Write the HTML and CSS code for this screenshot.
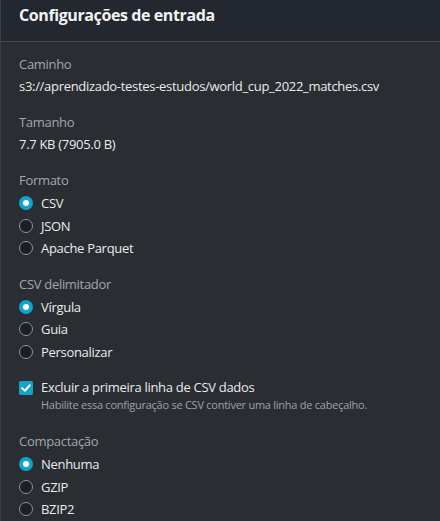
FILE: index.html
```html
<!DOCTYPE html>
<html lang="pt">
<head>
<meta charset="utf-8">
<link rel="stylesheet" href="styles.css">
</head>
<body>
<div class="panel">
  <div class="header"><h2 class="title">Configurações de entrada</h2></div>
  <div class="content">
    <div class="field">
      <div class="label">Caminho</div>
      <div class="value">s3://aprendizado-testes-estudos/world_cup_2022_matches.csv</div>
    </div>
    <div class="field">
      <div class="label">Tamanho</div>
      <div class="value">7.7 KB (7905.0 B)</div>
    </div>
    <div class="field">
      <div class="label">Formato</div>
      <div class="options">
        <div class="opt"><span class="radio on"></span><span>CSV</span></div>
        <div class="opt"><span class="radio"></span><span>JSON</span></div>
        <div class="opt"><span class="radio"></span><span>Apache Parquet</span></div>
      </div>
    </div>
    <div class="field">
      <div class="label">CSV delimitador</div>
      <div class="options">
        <div class="opt"><span class="radio on"></span><span>Vírgula</span></div>
        <div class="opt"><span class="radio"></span><span>Guia</span></div>
        <div class="opt"><span class="radio"></span><span>Personalizar</span></div>
      </div>
    </div>
    <div class="field check-field">
      <div class="check-row">
        <span class="checkbox"><svg viewBox="0 0 14 14" width="14" height="14"><path d="M3.2 7.2 L5.9 9.8 L10.8 4.2" fill="none" stroke="#fff" stroke-width="2" stroke-linecap="round" stroke-linejoin="round"/></svg></span>
        <div class="check-text">
          <div class="check-label">Excluir a primeira linha de CSV dados</div>
          <div class="desc">Habilite essa configuração se CSV contiver uma linha de cabeçalho.</div>
        </div>
      </div>
    </div>
    <div class="field">
      <div class="label">Compactação</div>
      <div class="options">
        <div class="opt"><span class="radio on"></span><span>Nenhuma</span></div>
        <div class="opt"><span class="radio"></span><span>GZIP</span></div>
        <div class="opt"><span class="radio"></span><span>BZIP2</span></div>
      </div>
    </div>
  </div>
</div>
</body>
</html>
```
FILE: styles.css
```css
html, body {
  margin: 0;
  padding: 0;
  background: #2a2e33;
}
body {
  font-family: "Open Sans", "Noto Sans", sans-serif;
  color: #e9ebed;
  font-size: 13px;
  letter-spacing: -0.3px;
  height: 521px;
  overflow: hidden;
}
.panel {
  border-left: 1px solid #3a3e45;
  min-height: 521px;
  background: #2a2e33;
}
.header {
  box-sizing: border-box;
  background: #232730;
  height: 42px;
  border-bottom: 1px solid #474b53;
  padding: 4px 0 0 18px;
}
.title {
  margin: 0;
  font-size: 16px;
  line-height: 22px;
  font-weight: 700;
  color: #f2f3f3;
  letter-spacing: -0.4px;
}
.content {
  padding: 13px 18px 0 18px;
  display: flex;
  flex-direction: column;
  gap: 17px;
}
.field {
  display: flex;
  flex-direction: column;
}
.label {
  color: #a2a7ae;
  font-size: 13px;
  line-height: 19px;
  margin-bottom: 3px;
}
.value {
  font-size: 13px;
  line-height: 19px;
  color: #e9ebed;
}
.options {
  display: flex;
  flex-direction: column;
  margin-top: -1px;
  margin-bottom: -2px;
}
.opt {
  display: flex;
  align-items: center;
  gap: 8px;
  height: 22.5px;
  font-size: 13px;
  color: #e9ebed;
}
.radio {
  box-sizing: border-box;
  width: 14px;
  height: 14px;
  border-radius: 50%;
  border: 1.5px solid #8d939b;
  background: #1b1f27;
  flex: none;
}
.radio.on {
  border: 4.5px solid #10a5cc;
  background: #fff;
}
.check-field {
  margin-bottom: 3px;
}
.check-row {
  display: flex;
  gap: 8px;
  align-items: flex-start;
}
.checkbox {
  width: 14px;
  height: 14px;
  border-radius: 2px;
  background: #10a5cc;
  flex: none;
  margin-top: 2.5px;
  display: flex;
}
.check-label {
  font-size: 13px;
  line-height: 19px;
}
.desc {
  font-size: 11px;
  line-height: 15px;
  color: #9ba3ad;
  letter-spacing: -0.25px;
}
```
